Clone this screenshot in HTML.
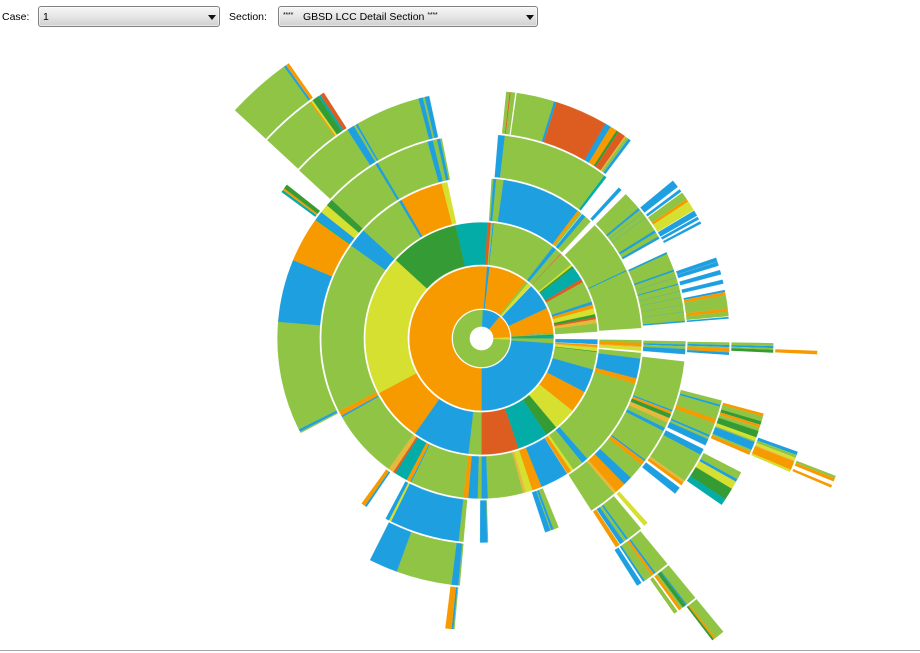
<!DOCTYPE html>
<html>
<head>
<meta charset="utf-8">
<title>Sunburst</title>
<style>
html,body{margin:0;padding:0;background:#fff;}
body{position:relative;width:920px;height:653px;overflow:hidden;font-family:"Liberation Sans",sans-serif;font-size:10.5px;color:#000;}
.lbl{position:absolute;top:10px;line-height:13px;}
.box{position:absolute;top:6px;height:19px;border:1px solid #808080;border-radius:3px;background:linear-gradient(#f6f6f6 0%,#e6e6e6 50%,#cfcfcf 100%);box-shadow:inset 0 0 0 1px rgba(255,255,255,.5);line-height:21px;padding-left:4px;box-sizing:content-box;white-space:nowrap;}
.st{display:inline-block;width:20px;font-size:7px;line-height:7px;vertical-align:3px;letter-spacing:-.2px;}
.st2{font-size:7px;line-height:7px;vertical-align:3px;letter-spacing:-.2px;margin-left:3px;}
.arr{position:absolute;top:8px;width:0;height:0;border-left:4.5px solid transparent;border-right:4.5px solid transparent;border-top:5px solid #111;}
#c{position:absolute;left:0;top:0;}
#line{position:absolute;left:0;top:650px;width:920px;height:1px;background:#a3a3ab;}
#line2{position:absolute;left:0;top:651px;width:920px;height:2px;background:#fdfdfd;}
</style>
</head>
<body>
<div class="lbl" style="left:2px;top:11px">Case:</div>
<div class="box" style="left:38px;width:176px">1<div class="arr" style="right:3px"></div></div>
<div class="lbl" style="left:229px;top:11px">Section:</div>
<div class="box" style="left:278px;width:254px"><span class="st">****</span>GBSD LCC Detail Section<span class="st2">****</span><div class="arr" style="right:3px"></div></div>
<svg id="c" width="920" height="653" viewBox="0 0 920 653" xmlns="http://www.w3.org/2000/svg"></svg>
<div id="line"></div><div id="line2"></div>
<script>
var C={g:"#8fc444",o:"#f79a00",b:"#1e9fe0",l:"#d5e030",d:"#359b35",t:"#04aca8",r:"#dd5d20",y:"#e6b83c",f:"#6db78f"};
var D={
1:"g 92 363,b 3 40,o 40 88,l 88 92",
2:"o 65 85.5,b 85.5 86,g 86 87,d 87 88,t 88 90,g 90 94,b 94 180,o 180 364.5,b 364.5 366.5,o 6.5 38,g 38 40,l 40 43,b 43.5 65",
3:"t 347 363,r 3 4.7,g 4.7 5.5,b 5.5 6.2,g 6.2 38,b 38 40,g 40 43,r 43 43.4,g 43.4 50.5,l 50.5 51.5,d 51.5 52.5,t 52.5 59.3,r 59.3 61,g 61 71.5,b 71.5 73,o 73 75,l 75 78,d 78 79.5,r 79.5 80.5,y 80.5 82.5,g 82.5 86.6,b 90.5 92.8,o 93.2 94.2,y 94.2 94.8,l 94.8 96.3,d 96.3 96.8,g 96.8 105.6,b 105.6 117.5,o 117.5 128.5,l 128.5 140,d 140 146,t 146 161.5,r 161.5 180,g 180 186.5,b 186.5 215,o 215 242,l 242 312.5,d 312.5 347",
4:"g 3.6 4.3,b 4.3 5.3,g 5.3 8,b 8 37,o 37 38,g 38 38.8,b 39 40.5,g 40.5 43,g 45 86.2,b 64.7 65.1,g 90.6 91.6,o 91.6 92.8,y 92.8 93.2,l 93.2 94.4,g 95.2 97.3,b 97.3 104.5,o 104.5 106.5,g 106.5 138.7,b 138.7 141,g 141 145,l 145 146,o 146 147.5,b 147.7 158,o 158 161.5,l 161.5 164,y 164 165,g 165 177.8,b 177.8 180,g 180 181.4,b 181.4 184.8,o 184.8 186.6,g 186.6 206,b 206 206.5,o 206.5 207.9,t 207.9 212.7,r 212.7 213.5,y 213.5 215.5,g 215.5 240.5,b 240.5 241.2,o 241.2 243,g 243 305.5,b 305.5 312.5,g 312.5 329,b 329 330,o 330 345.6,l 345.6 347.6",
5:"b 4.7 6.6,g 6.6 37,t 37 37.8,b 42.3 43.3,g 45 60.7,b 50.3 50.9,f 52 52.2,f 53.5 53.7,b 58 58.7,b 60 60.7,g 65 85.4,b 65 65.5,b 70.3 70.8,f 72.5 72.7,b 74.4 74.7,f 76.5 76.7,f 78.3 78.5,f 80.4 80.6,f 82.4 82.6,b 85 85.4,g 90.8 91.7,b 91.7 92.2,g 92.2 93,b 93 94.4,g 96.5 110.5,b 110.5 111,o 111 111.8,d 111.8 113,y 113 114.4,g 114.4 116,b 116 117,g 117 126.5,b 126.5 127,o 127 128.3,g 128.3 133,b 133 135.6,o 135.6 138.7,y 138.7 139.5,g 139.5 147.4,g 157.8 159.3,b 159.3 160,g 160 160.3,b 160.3 161.8,g 178.1 178.4,b 178.4 180.4,g 185.1 186.5,b 186.5 206.3,l 206.3 207,b 207 208,b 214.3 214.9,o 214.9 216,g 242.4 242.8,b 242.8 243.6,g 243.6 274.7,b 274.7 292.6,o 292.6 305.5,t 305.5 306,b 306 308.3,l 308.3 310.8,d 310.8 312.8,g 312.8 344.7,b 328.7 329.4,b 344.7 346.2,g 346.2 347.4,b 347.4 348.3,g 348.3 348.8",
6:"g 5.7 6.5,r 6.5 6.8,g 6.8 7.8,g 8.2 17,b 17 17.6,r 17.6 30,b 30 31.4,o 31.4 33,d 33 33.6,r 33.6 35.3,y 35.3 35.6,g 35.6 36.3,b 36.3 37,b 50.5 52.3,b 53 53.7,g 54 55.8,o 55.8 56.5,l 56.5 58.8,b 59 60.3,b 60.6 61.3,b 61.8 62.4,b 71 71.9,b 72 72.9,b 74 75,b 76.3 77.2,b 78.7 79.2,o 79.2 80,g 80 83,o 83 83.8,g 83.8 84.8,b 85 85.4,g 90.9 91.5,b 91.5 92,g 92 92.3,o 92.3 93.2,b 93.2 93.8,g 104.5 105.5,b 105.5 106,g 106 109,o 109 110,g 110 112.9,b 112.9 113.4,g 113.4 114,b 114 115.5,b 116.5 118,g 118 125,y 125 125.5,o 125.5 126.3,b 127 128.7,l 138 139,g 140 143.8,b 143.8 144.3,g 144.3 145,b 145 146,o 146.2 147.2,g 185 185.4,b 185.4 187,g 187 200,b 200 206.7,t 306.2 306.8,o 306.8 307.3,d 307.3 308.3,g 312.7 327.3,b 327.3 329,g 329 329.5,b 329.5 330,g 330 345.3,b 345.3 346.3,g 346.3 346.8,b 346.8 347.8",
7:"g 90.9 91.5,b 91.5 91.9,g 91.9 92.2,d 92.2 92.8,o 104.9 105.5,g 105.5 106.5,d 106.5 107.2,o 107.2 107.8,g 107.8 108.5,d 108.5 109.8,l 109.8 110.5,g 110.5 110.8,b 110.8 112.4,g 112.4 112.8,o 112.8 113.5,g 117.3 118.8,b 118.8 119.4,l 119.4 121,d 121 123.4,t 123.4 124.7,g 140.5 143.4,b 143.4 143.8,o 143.8 144.4,g 144.4 146,b 146 146.4,b 146.8 147.8,g 185.3 185.5,b 185.5 185.9,o 185.9 187.1,g 312.8 324,o 324 324.3,l 324.3 324.7,d 324.7 326,t 326 326.5,r 326.5 327.3",
8:"o 92.1 92.7,b 109.7 110.3,g 110.3 110.8,l 110.8 111.3,y 111.3 111.5,o 111.5 113,l 113 113.4,g 140.5 142.3,b 142.3 142.5,d 142.5 143.2,g 143.2 143.5,o 143.5 144,g 144.3 145,g 312.8 324,b 324 324.4,o 324.4 325",
9:"g 111.2 111.6,o 111.6 112.1,o 112.7 113.1,g 140.5 142,o 142 142.3,d 142.3 142.6"
};
var cx=481.5,cy=338.5,s=[];
function P(r,a){a=a*Math.PI/180;return (cx+r*Math.sin(a)).toFixed(2)+" "+(cy-r*Math.cos(a)).toFixed(2);}
for(var n=1;n<=9;n++){
  var ri=n==1?12:30+44*(n-2),ro=n==1?28.5:ri+42;
  D[n].split(",").forEach(function(x){
    var p=x.split(" "),a=+p[1],b=+p[2],f=(b-a)>180?1:0,c=C[p[0]];
    var st=(b-a)<0.8?'':' stroke="'+c+'" stroke-width=".3"';
    s.push('<path fill="'+c+'"'+st+' d="M'+P(ri,a)+'L'+P(ro,a)+'A'+ro+' '+ro+' 0 '+f+' 1 '+P(ro,b)+'L'+P(ri,b)+'A'+ri+' '+ri+' 0 '+f+' 0 '+P(ri,a)+'Z"/>');
  });
}
document.getElementById("c").innerHTML=s.join("");
</script>
</body>
</html>
